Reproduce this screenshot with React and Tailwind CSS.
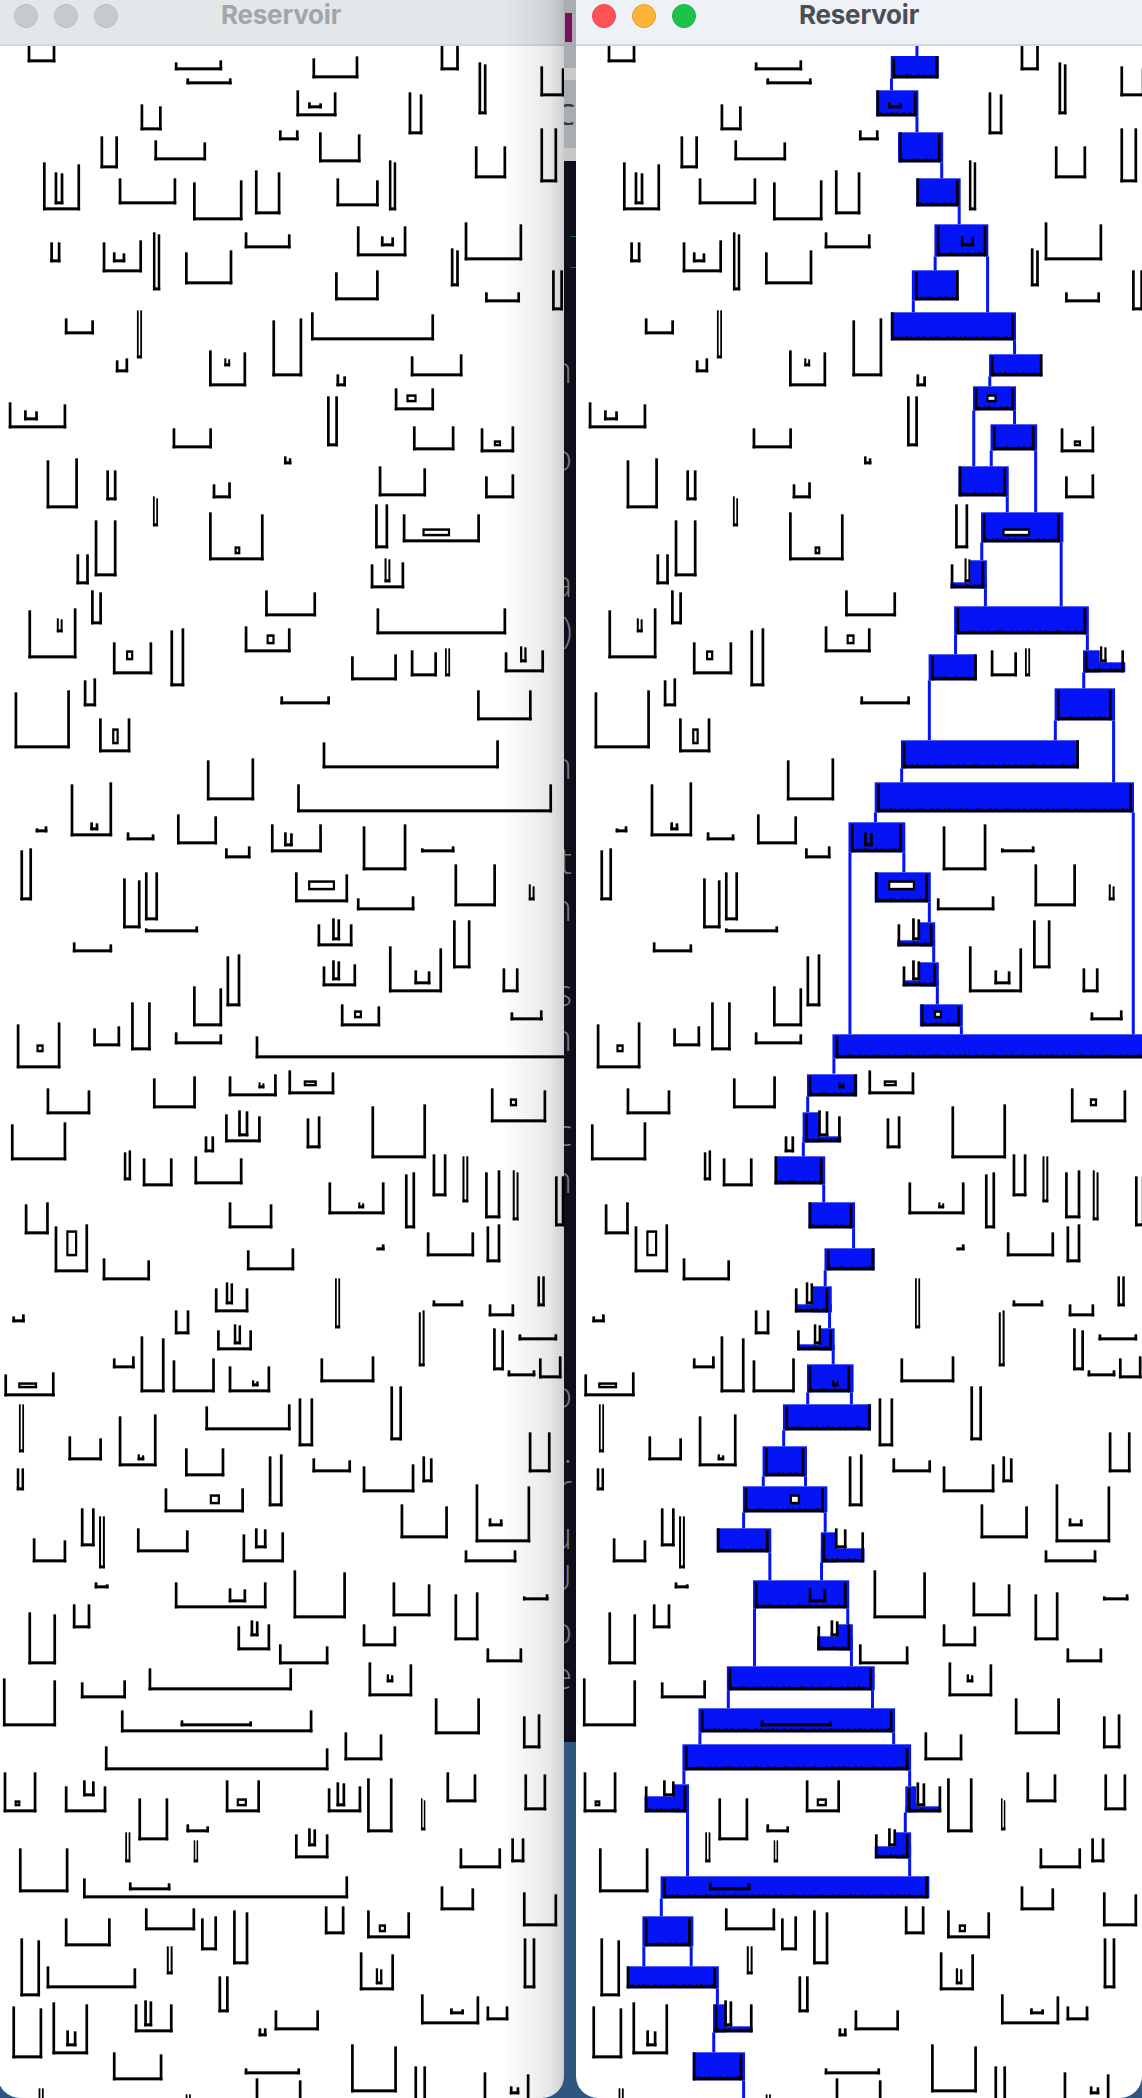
import React from "react";

const SX = 1142 / 1568;
const crops = [
  [0, [
    [38,76,130,130,187],[240,305,187,181,211],[256,318,235,235,253],[429,492,175,169,235],[605,630,130,130,211],
    [657,668,187,193,343],[742,775,199,205,289],[193,222,313,319,391],[407,462,271,277,349,[423,442,307,325]],
    [561,580,277,283,403],[138,162,409,409,505],[212,283,421,427,481],[383,410,391,391,421],[438,495,397,403,487],
    [652,695,439,439,535],[742,765,385,385,547],[59,110,487,493,631,[75,87,517,613]],[163,242,535,535,613],
    [265,333,547,541,661],[350,385,511,517,643],[462,520,535,541,619],[534,544,481,487,631],[69,83,727,727,787],
    [141,195,727,721,817,[155,172,757,787]],[210,220,697,703,871],[254,319,757,751,853],[336,399,697,703,745],
    [490,558,679,679,769,[523,541,709,739]],[638,717,667,673,781],[619,630,745,751,859],[460,520,817,811,901],
    [666,714,877,877,907],[758,773,811,811,931],[89,129,955,961,1003],[188,195,931,931,1075],[427,596,937,943,1021],
  ]],
  [350, [
    [159,176,31,25,67],[287,338,1,7,109,[308,316,25,49]],[374,415,-89,-95,79],[462,475,73,79,109],[564,635,19,13,79],
    [542,596,115,115,181,[558,572,133,157,1]],[12,91,157,163,235,[33,52,181,211]],[449,464,139,139,289],[237,291,235,235,295],
    [567,624,229,229,301],[660,706,235,229,307,[678,688,271,289,1]],[64,107,331,325,475],[146,160,361,361,451],
    [390,400,319,325,343],[292,317,403,397,445],[520,585,349,355,439],[666,706,379,373,445],[210,217,439,445,529],
    [515,533,463,463,595],[553,659,493,493,577,[580,618,535,559,1]],[287,362,487,493,631,[322,330,589,613,1]],
    [130,160,511,511,679],[105,122,613,613,703],[509,555,643,637,715,[528,536,625,697]],[125,140,721,727,823],
    [364,434,721,727,799],[39,105,781,775,925,[78,86,805,847]],[517,695,775,775,853],[234,253,841,835,1009],
    [336,399,829,835,907,[366,377,853,883,1]],[155,209,877,877,973,[173,183,901,931,1]],[482,545,919,913,991],
    [564,600,901,907,979],[611,618,895,895,979],[693,747,907,901,967,[714,723,889,937]],[115,132,991,985,1069],
    [385,453,1039,1039,1063],
  ]],
  [700, [
    [20,96,-23,-29,145],[655,730,-29,-29,61],[136,179,55,55,157,[154,163,85,133,1]],[443,685,127,121,205],
    [284,349,181,175,301],[408,758,253,253,337],[97,154,253,247,409,[124,135,367,391]],[49,65,385,379,397],
    [174,212,397,403,421],[243,298,343,349,433],[309,344,445,439,475],[372,442,373,373,457,[390,402,397,439]],
    [498,558,379,373,511],[578,624,445,439,457],[28,44,451,445,601],[169,193,535,541,685],[199,217,517,517,661],
    [405,478,517,523,607,[423,460,541,571,1]],[490,569,595,589,631],[624,681,493,493,619],[726,734,553,559,601],
    [199,272,685,679,697],[436,484,673,673,739,[456,467,655,721]],[622,646,661,661,805],[100,154,727,733,757],
    [311,330,769,763,919],[443,489,799,793,859,[456,467,781,841]],[534,607,739,745,877,[569,591,811,853]],
    [690,712,805,805,877],[265,305,859,865,979],[180,207,907,907,1051],[468,522,913,919,979,[486,497,931,955,1]],
    [701,745,937,931,961],[23,83,973,967,1105,[50,60,1033,1057,1]],[128,165,985,979,1039],[240,305,997,1003,1033],
    [351,820,1009,1009,1075],
  ]],
  [1050, [
    [314,380,79,73,139,[355,363,97,115]],[396,459,61,67,133,[417,435,91,109,1]],[210,269,85,79,175],[64,124,115,121,193],
    [674,750,115,121,217,[700,710,145,169,1]],[15,91,223,217,331],[309,358,193,199,277,[327,341,181,259]],[281,294,259,259,307],
    [421,440,205,199,295],[510,585,169,163,325],[170,180,307,301,391],[196,237,325,325,409],[267,333,319,325,403],
    [594,613,313,313,439],[635,643,319,319,457],[666,687,367,361,505],[704,712,361,367,511],[762,775,379,379,529],
    [451,528,397,397,493,[492,500,457,475]],[556,570,373,367,535],[34,67,463,457,553],[75,121,529,523,667,[91,106,541,619,1]],
    [314,374,457,463,535],[586,651,547,547,619],[668,687,529,523,637],[517,528,595,583,601],[141,206,625,631,691],
    [339,404,601,595,661],[295,341,715,715,787,[310,320,697,763]],[460,467,685,685,835],[738,748,679,679,769],
    [594,636,751,751,769],[671,706,763,763,799],[17,34,799,793,817],[240,260,781,781,853],[298,346,841,841,901,[321,331,823,883]],
    [575,583,787,781,949],[677,692,835,841,961],[712,765,853,853,871],[155,185,925,919,955],[193,226,859,865,1027],
    [237,295,931,925,1027],[314,371,949,949,1027,[346,355,991,1009]],[440,514,925,919,997],[697,735,961,961,979],
    [740,771,925,919,985],[6,75,973,967,1039,[25,51,997,1015,1]],
  ]],
  [1400, [
    [26,33,13,13,157],[163,215,49,43,199,[189,198,163,181]],[94,140,109,115,181],[254,308,145,145,229],[282,399,19,13,91],
    [410,430,-5,-5,139],[536,552,-41,-41,121],[726,756,97,97,217],[369,388,169,163,319],[429,482,175,181,217],
    [498,569,199,193,277],[580,594,169,175,247],[23,33,205,205,271],[226,335,265,265,337,[288,302,283,313,1]],
    [653,728,253,259,427,[671,690,355,379]],[550,615,313,319,415],[111,130,325,325,439],[136,144,349,349,505],
    [45,91,415,421,487],[188,259,385,391,457],[333,390,403,397,487,[350,366,385,445]],[638,709,451,451,487],
    [130,149,547,553,565],[240,366,547,547,625,[314,338,565,607]],[403,475,511,517,655],[539,591,547,553,649],
    [624,657,583,577,721],[718,753,589,583,601],[100,124,613,613,685],[39,77,637,643,793],[326,371,679,673,751,[344,355,661,709]],
    [498,544,673,679,739],[383,451,733,739,793],[668,717,745,745,787],[204,401,805,805,871],[506,566,787,793,889,[531,540,823,847]],
    [4,77,835,841,979],[111,173,847,841,895],[597,659,895,895,1003],[166,429,931,931,997,[248,346,961,979]],
    [718,742,949,943,1045],
  ]],
  [1740, [
    [144,451,19,25,91],[473,525,-23,-17,61],[5,50,97,97,217,[20,28,181,199,1]],[89,146,139,139,217,[114,130,121,169]],
    [310,357,121,121,217,[325,339,175,199,1]],[450,496,145,139,217,[462,474,127,199]],[504,539,115,115,277],[613,654,97,103,187],
    [720,750,103,103,211],[190,231,175,175,301],[256,287,253,259,277],[578,584,175,181,271],[172,179,277,277,367],
    [266,272,301,301,367],[405,451,283,283,355,[423,434,265,319]],[702,720,295,295,367],[631,688,325,325,385],
    [26,94,325,325,457],[114,478,415,409,475,[177,234,427,451]],[605,651,439,445,511],[718,765,457,463,559],
    [446,473,499,499,583],[199,268,505,505,571],[504,563,511,517,595,[520,530,553,577,1]],[89,152,535,535,619],
    [276,298,535,529,631],[320,341,511,517,673],[229,237,619,619,703],[28,55,595,601,769],[64,187,679,685,745],
    [494,541,637,643,751,[516,525,685,733]],[719,735,595,595,745],[300,314,709,709,817],[578,658,763,769,853,[618,637,805,823]],
    [668,698,799,799,841],[185,237,793,793,877,[198,209,781,859]],[17,58,799,805,955],[72,121,787,793,943,[91,105,871,919]],
    [377,438,811,811,871],[355,366,865,865,889],[482,545,913,919,1057],[155,223,937,943,1021],[336,412,985,985,1003],
    [351,414,1015,1021,1100],[569,585,979,979,1100],[664,727,997,1003,1100,[700,713,1039,1063]],[53,60,1045,1045,1100],
    [255,262,1063,1063,1100],
  ]],
];

const blue = [
  [0, [
    [1223,1289,168,235],[1203,1261,271,349],[1233,1295,397,487],[1258,1319,535,619],[1283,1357,673,769],[1252,1316,811,901],[1223,1395,937,1021],
  ], [
    [1259,130,168],[1224,235,271],[1259,349,397],[1293,487,535],[1317,619,673],[1284,769,811],[1356,769,937],[1254,901,937],[1393,1021,1063],
  ]],
  [350, [
    [1358,1431,13,79],[1336,1395,109,181],[1360,1424,223,301],[1316,1385,349,439],[1347,1460,487,577],
    [1332,1355,631,715],[1305,1355,697,715],[1310,1495,769,853],[1275,1340,913,991],[1487,1510,901,967],[1487,1545,937,967],[1448,1531,1015,1111],
  ], [
    [1359,79,109],[1393,181,223],[1337,181,349],[1361,301,349],[1422,301,487],[1383,439,487],[1348,577,631],[1457,577,769],
    [1353,715,769],[1312,853,913],[1493,853,901],[1276,991,1170],[1488,967,1015],
  ]],
  [700, [
    [1237,1481,121,205],[1201,1557,247,337],[1165,1243,367,457],[1201,1278,517,607],[1263,1284,667,739],[1232,1284,721,739],
    [1263,1289,787,859],[1240,1289,841,859],[1263,1322,913,979],[1143,1600,1003,1075],
  ], [
    [1449,61,121],[1529,61,247],[1238,205,247],[1202,337,367],[1556,337,1003],[1167,457,1003],[1241,457,517],[1276,607,667],
    [1282,739,787],[1287,859,913],[1320,979,1003],[1145,1075,1121],
  ]],
  [1050, [
    [1108,1177,73,139],[1102,1125,187,277],[1102,1155,259,277],[1064,1133,319,403],[1110,1174,457,535],[1132,1201,595,661],
    [1115,1142,709,787],[1092,1142,763,787],[1125,1146,835,901],[1096,1146,883,901],[1108,1172,943,1027],
  ], [
    [1109,139,187],[1103,277,319],[1131,403,457],[1172,535,595],[1133,661,709],[1139,787,835],[1144,901,943],[1109,1027,1063],[1169,1027,1063],
  ]],
  [1400, [
    [1075,1196,13,91],[1047,1108,139,229],[1020,1136,259,337],[984,1059,385,457],[1127,1148,397,487],[1127,1187,445,487],
    [1034,1166,541,625],[1150,1171,673,751],[1122,1171,709,751],[998,1201,799,871],[959,1229,925,997],[937,1251,1033,1111],
  ], [
    [1076,91,139],[1048,229,259],[1106,229,259],[1021,337,385],[1133,337,397],[1057,457,541],[1128,487,541],
    [1036,625,799],[1164,625,673],[1169,751,799],[1000,871,925],[1198,871,925],[961,997,1033],[1227,997,1033],
  ]],
  [1740, [
    [925,946,133,217],[885,946,169,217],[1243,1258,139,217],[1243,1291,199,217],[1230,1251,277,355],[1201,1251,319,355],
    [907,1276,409,475],[882,952,529,619],[861,987,679,745],[979,997,793,877],[979,1033,859,877],[951,1023,937,1021],
  ], [
    [939,91,133],[1249,91,139],[944,217,409],[1243,217,277],[1249,355,409],[908,475,529],[884,619,679],[949,619,679],[985,745,793],[980,877,937],[1021,1021,1100],
  ]],
];

const B = 3;
const wall = (w) => Math.min(2.7, w / 2.9);

function Inner({ off, d }) {
  const [a, b, t, u, box] = d;
  const x1 = a * SX, x2 = b * SX, y1 = off + t / 3, y2 = off + u / 3;
  if (box) {
    return (
      <g>
        <rect x={x1} y={y1} width={x2 - x1} height={y2 - y1} fill="#000" />
        <rect x={x1 + 2.2} y={y1 + 2.5} width={Math.max(x2 - x1 - 4.4, 1.2)} height={Math.max(y2 - y1 - 5, 1)} fill="#fff" />
      </g>
    );
  }
  const W = wall(x2 - x1);
  return (
    <g fill="#000">
      <rect x={x1} y={y1} width={W} height={y2 - y1} />
      <rect x={x2 - W} y={y1 + 1} width={W} height={y2 - y1 - 1} />
      <rect x={x1} y={y2 - B} width={x2 - x1} height={B} />
    </g>
  );
}

function Shapes() {
  return crops.map(([off, items]) =>
    items.map((s, i) => {
      const [a, b, yl, yr, yb, inner] = s;
      const x1 = a * SX, x2 = b * SX, t1 = off + yl / 3, t2 = off + yr / 3, bt = off + yb / 3;
      const W = wall(x2 - x1);
      return (
        <g key={off + "-" + i} fill="#000">
          <rect x={x1} y={t1} width={W} height={bt - t1} />
          <rect x={x2 - W} y={t2} width={W} height={bt - t2} />
          <rect x={x1} y={bt - B} width={x2 - x1} height={B} />
          {inner && <Inner off={off} d={inner} />}
        </g>
      );
    })
  );
}

function Water() {
  return blue.map(([off, rects, lines]) => (
    <g key={off}>
      {lines.map(([x, a, b], i) => (
        <rect key={i} x={x * SX - 1.5} y={off + a / 3} width={3} height={(b - a) / 3} fill="#0414f7" />
      ))}
      {rects.map(([a, b, t, u], i) => (
        <rect key={i} x={a * SX} y={off + t / 3} width={(b - a) * SX} height={(u - t) / 3} fill="#0414f7" />
      ))}
    </g>
  ));
}

function Teeth() {
  return blue.map(([off, rects]) =>
    rects.map(([a, b, t, u], i) => (
      <line
        key={off + "-" + i}
        x1={a * SX + 4}
        x2={b * SX - 4}
        y1={off + u / 3 - 3.5}
        y2={off + u / 3 - 3.5}
        stroke="#000"
        strokeWidth="1"
        strokeDasharray="2 5 1 3 3 2 1 6 2 4"
      />
    ))
  );
}

function TitleBar({ active }) {
  const dots = active
    ? ["bg-[#ff5257] border-[#e8474c]", "bg-[#ffb238] border-[#e9a02e]", "bg-[#1cc24a] border-[#18ae42]"]
    : ["bg-[#c7cacd] border-[#b9bcbf]", "bg-[#c7cacd] border-[#b9bcbf]", "bg-[#c7cacd] border-[#b9bcbf]"];
  return (
    <div className={"grid grid-cols-[1fr_auto_1fr] h-[46px] shrink-0 border-b-2 border-[#d5d7dc] " + (active ? "bg-[#eef1f6]" : "bg-[#e4e7ea]")}>
      <div className="flex gap-4 pl-4 pt-1">
        {dots.map((c, i) => (
          <span key={i} className={"w-6 h-6 rounded-full border " + c} />
        ))}
      </div>
      <div className={"text-[26px] leading-[30px] font-bold tracking-[-0.2px] font-['Inter',sans-serif] " + (active ? "text-[#4b4e55]" : "text-[#a3a6a9]")}>
        Reservoir
      </div>
      <div />
    </div>
  );
}

const letters = [
  ["n", 372], ["o", 460], ["a", 586], [")", 632], ["n", 768], ["t", 863], ["n", 910], ["s", 995], ["n", 1040],
  ["c", 1135], ["n", 1182], ["o", 1397], [".", 1452], ["r", 1490], ["u", 1538], ["U", 1580], ["p", 1633], ["e", 1678],
];

export default function App() {
  return (
    <div className="relative flex w-[1142px] h-[2098px] overflow-hidden bg-[#2f5680]">
      <div className="relative flex flex-col -ml-[2px] w-[566px] h-full shrink-0 overflow-hidden rounded-b-[22px] bg-white">
        <TitleBar />
        <svg className="block flex-1" width="566" height="2052" viewBox="-2 46 566 2052">
          <Shapes />
        </svg>
        <div className="absolute top-0 bottom-0 right-0 w-[62px] bg-[linear-gradient(to_right,rgba(0,0,0,0),rgba(0,0,0,0.05)_45%,rgba(0,0,0,0.09)_75%,rgba(0,0,0,0.19))]" />
      </div>

      <div className="relative flex flex-col w-3 h-full shrink-0 overflow-hidden">
        <div className="relative h-[161px] shrink-0 bg-[#a9acb1] overflow-hidden">
          <div className="absolute left-[1px] top-[13px] w-[7px] h-[29px] bg-[#7a0f5f]" />
          <div className="absolute left-0 top-[68px] w-full h-[12px] bg-[#c9caca]" />
          <div className="absolute left-0 top-[148px] w-full h-[13px] bg-[#c6c7c7]" />
          <span className="absolute right-[1px] top-[96px] text-[30px] leading-[36px] font-['Open_Sans',sans-serif] text-[#33363a]">C</span>
        </div>
        <div className="relative flex-1 bg-[#0e0f1b]">
          <div className="absolute left-[6px] top-[75px] w-[6px] h-px bg-[#14663a]" />
          <div className="absolute left-[6px] top-[106px] w-[6px] h-px bg-[#14663a]" />
        </div>
        <div className="h-[356px] shrink-0 bg-[#2f5680]" />
        {letters.map(([c, y], i) => (
          <span
            key={i}
            className="absolute right-[4px] text-[36px] leading-[48px] font-light font-['Open_Sans',sans-serif] text-[#77777d]"
            style={{ top: y - 26 }}
          >
            {c}
          </span>
        ))}
      </div>

      <div className="relative flex flex-col w-[566px] h-full shrink-0 overflow-hidden rounded-b-[22px] bg-white">
        <TitleBar active />
        <svg className="block flex-1" width="566" height="2052" viewBox="576 46 566 2052">
          <Water />
          <g transform="translate(580 0)">
            <Shapes />
          </g>
          <Teeth />
        </svg>
      </div>
    </div>
  );
}
